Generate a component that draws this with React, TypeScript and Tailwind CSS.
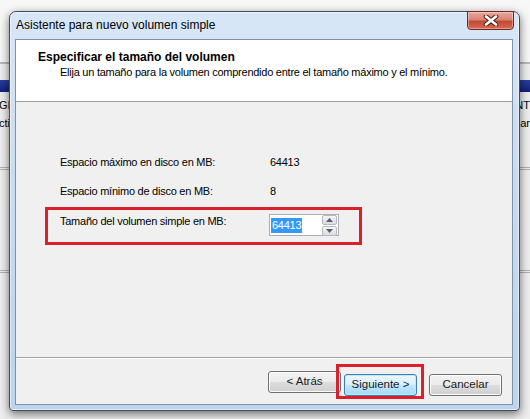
import React from "react"

function Spinner() {
  return (
    <div className="flex flex-col gap-px pr-px py-px">
      <div className="w-[15px] h-[10px] border border-[#b4b9c2] rounded-[2px] bg-gradient-to-b from-[#f6f6f6] to-[#dcdcdc] flex items-center justify-center">
        <svg width="7" height="4" viewBox="0 0 7 4">
          <path d="M0 4 L3.5 0 L7 4 Z" fill="#4c607f" />
        </svg>
      </div>
      <div className="w-[15px] h-[10px] border border-[#b4b9c2] rounded-[2px] bg-gradient-to-b from-[#f6f6f6] to-[#dcdcdc] flex items-center justify-center">
        <svg width="7" height="4" viewBox="0 0 7 4">
          <path d="M0 0 L7 0 L3.5 4 Z" fill="#4c607f" />
        </svg>
      </div>
    </div>
  )
}

function WinButton({ label, primary }: { label: string; primary?: boolean }) {
  return (
    <button
      className={
        primary
          ? "w-[73px] h-[22px] rounded-[3px] border border-[#3c7fb1] bg-[linear-gradient(to_bottom,#eaf6fd_0%,#d9f0fc_50%,#bee6fd_50%,#a7d9f5_100%)] shadow-[inset_0_0_0_1px_#c5e6f9] text-[11.5px] font-normal text-[#1a1a1a] leading-none"
          : "w-[73px] h-[22px] rounded-[3px] border border-[#707070] bg-[linear-gradient(to_bottom,#f2f2f2_0%,#ebebeb_50%,#dddddd_50%,#cfcfcf_100%)] shadow-[inset_0_0_0_1px_#fcfcfc] text-[11.5px] font-normal text-[#1a1a1a] leading-none"
      }
    >
      {label}
    </button>
  )
}

export default function App() {
  return (
    <div className="relative w-[530px] h-[419px] overflow-hidden bg-[#f7f7f7] font-['Liberation_Sans',Arial,sans-serif] text-black">
      {/* window behind the dialog */}
      <div className="absolute inset-x-0 top-[62px] bottom-0 bg-[#eeeeee] border-t-2 border-[#b8b8b8]">
        <div className="mt-[16px] h-[12px] bg-gradient-to-b from-[#2a3f9e] to-[#13217a]" />
        <div className="relative h-[40px] text-[11px] leading-[14px]">
          <span className="absolute left-[-1px] top-[6px]">GI</span>
          <span className="absolute left-[-1px] top-[24px]">ctiv</span>
          <span className="absolute right-0 top-[6px]">NT</span>
          <span className="absolute right-0 top-[24px]">ar</span>
        </div>
        <div className="mt-[35px] h-[3px] border-y border-[#b0b0b0]" />
        <div className="mt-[100px] h-[3px] border-y border-[#b0b0b0]" />
      </div>

      {/* dialog window */}
      <div className="absolute left-[9px] top-[11px] w-[511px] h-[400px] rounded-t-[7px] rounded-b-[4px] border border-[#414b59] bg-[linear-gradient(to_bottom,#d8e7f7_0%,#c8dcf1_40%,#bcd4ee_100%)] shadow-[0_3px_10px_rgba(0,0,0,0.55),inset_0_0_0_1px_rgba(255,255,255,0.55)] flex flex-col">
        <div className="h-[27px] flex items-center pl-[6px] pb-[2px] text-[12px] text-black">
          Asistente para nuevo volumen simple
        </div>

        <div className="absolute right-[5px] top-[-1px] w-[47px] h-[19px] rounded-b-[4px] border border-[#6a2a22] bg-[linear-gradient(to_bottom,#e8a898_0%,#d98474_45%,#c24a35_55%,#d86a50_100%)] shadow-[inset_0_0_0_1px_rgba(255,255,255,0.35)] flex items-center justify-center">
          <svg width="16" height="11" viewBox="0 0 16 11">
            <path d="M3 1.5 L13 9.5 M13 1.5 L3 9.5" stroke="#4a1d16" strokeWidth="4.6" strokeLinecap="round" />
            <path d="M3 1.5 L13 9.5 M13 1.5 L3 9.5" stroke="#ffffff" strokeWidth="2.6" strokeLinecap="round" />
          </svg>
        </div>

        <div className="flex-1 ml-[5px] mr-[6px] mb-[5px] border border-[#7d91ab] bg-[#f0f0f0] flex flex-col">
          <div className="h-[62px] bg-white border-b border-[#a0a0a0] pl-[22px] pt-[10px]">
            <div className="text-[12px] leading-[15px] font-bold">Especificar el tamaño del volumen</div>
            <div className="pl-[22px] text-[11px] leading-[15px] tracking-[-0.25px]">
              Elija un tamaño para la volumen comprendido entre el tamaño máximo y el mínimo.
            </div>
          </div>

          <div className="relative h-[255px] pl-[44px] pt-[46px] text-[11px] tracking-[-0.25px]">
            <div className="flex h-[29px] items-center">
              <div className="w-[210px]">Espacio máximo en disco en MB:</div>
              <div>64413</div>
            </div>
            <div className="flex h-[29px] items-center">
              <div className="w-[210px]">Espacio mínimo de disco en MB:</div>
              <div>8</div>
            </div>
            <div className="flex h-[29px] items-start">
              <div className="w-[210px] pt-[8px] leading-[14px]">Tamaño del volumen simple en MB:</div>
              <div className="-ml-px mt-[8px] w-[70px] h-[22px] border border-[#abadb3] bg-white flex items-center justify-between">
                <span className="ml-px px-[1px] bg-[#3399ff] text-white leading-[15px]">64413</span>
                <Spinner />
              </div>
            </div>
            <div className="absolute left-[29px] top-[105px] w-[317px] h-[38px] border-[3px] border-[#dc1f2b]" />
          </div>

          <div className="h-[2px] border-t border-[#a0a0a0] bg-white" />

          <div className="relative flex-1 flex justify-end items-start pt-[12px] pr-[10px]">
            <WinButton label="< Atrás" />
            <div className="ml-[3px]">
              <WinButton label="Siguiente >" primary />
            </div>
            <div className="ml-[12px]">
              <WinButton label="Cancelar" />
            </div>
            <div className="absolute left-[320px] top-[5px] w-[88px] h-[35px] border-[3px] border-[#dc1f2b]" />
          </div>
        </div>
      </div>
    </div>
  )
}
